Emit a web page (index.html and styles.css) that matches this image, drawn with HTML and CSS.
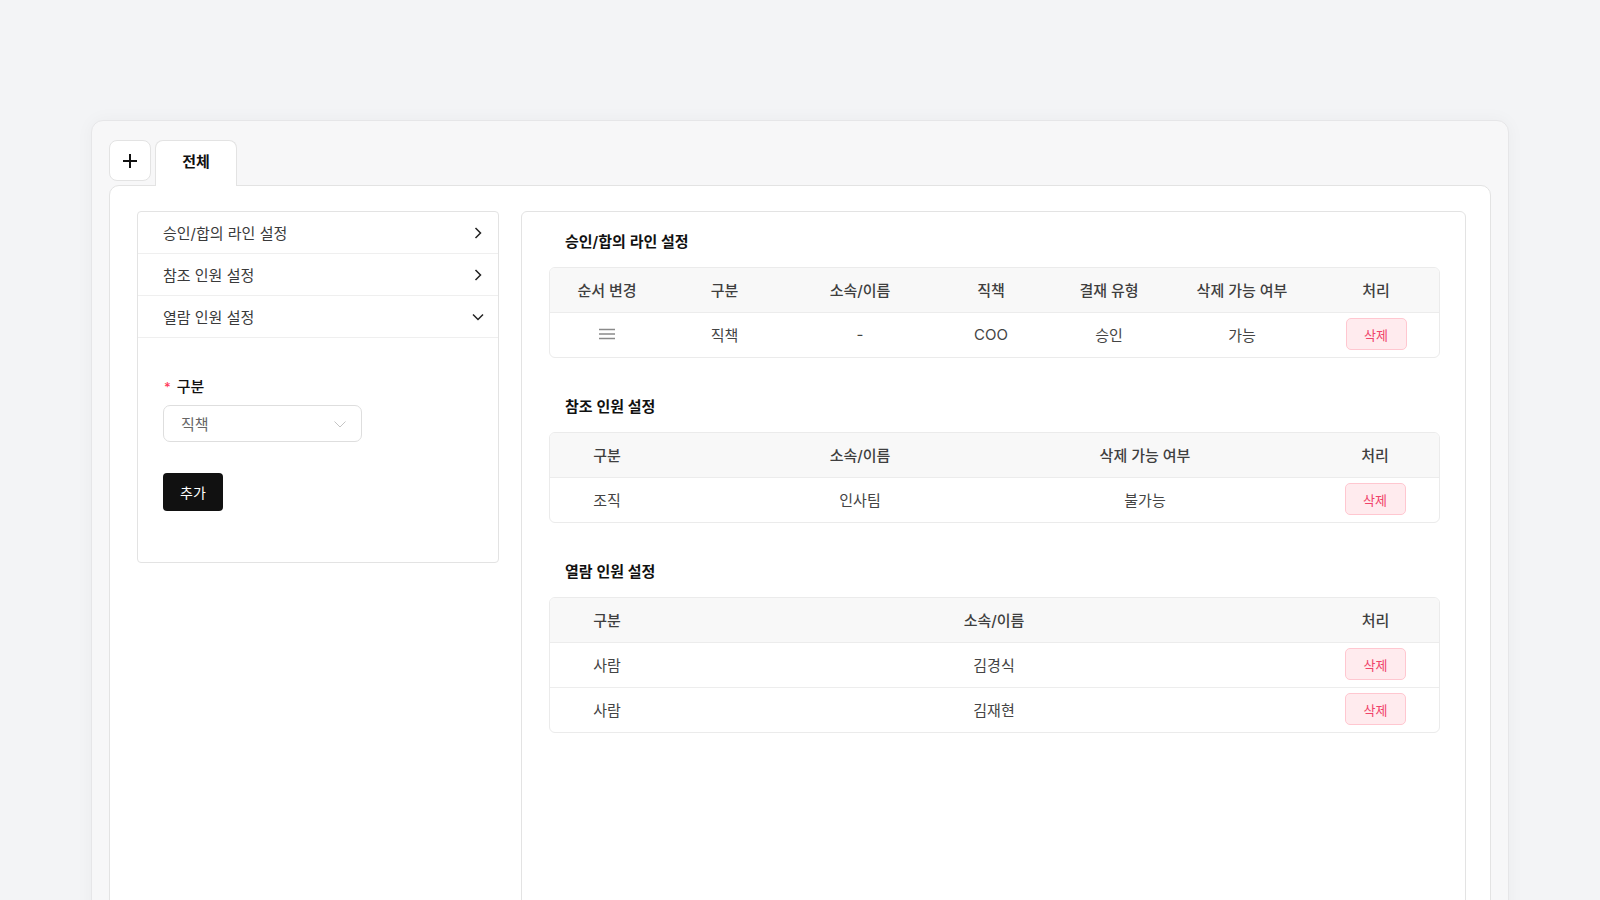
FILE: index.html
```html
<!DOCTYPE html>
<html lang="ko">
<head>
    <meta charset="UTF-8">
    <meta name="viewport" content="width=device-width, initial-scale=1.0">
    <title>결재 라인 설정</title>
    <link rel="stylesheet" href="styles.css">
</head>
<body>
    <div class="card">
        <div class="tabs">
            <button class="tab-add" aria-label="탭 추가">
                <svg width="16" height="16" viewBox="0 0 16 16"><path d="M8 1v14M1 8h14" stroke="#111" stroke-width="2" fill="none"/></svg>
            </button>
            <div class="tab active">전체</div>
        </div>

        <div class="panel">
            <aside class="side">
                <div class="acc-item">
                    <span>승인/합의 라인 설정</span>
                    <svg width="16" height="16" viewBox="0 0 16 16"><path d="M5.5 3l5 5-5 5" stroke="#222" stroke-width="1.5" fill="none"/></svg>
                </div>
                <div class="acc-item">
                    <span>참조 인원 설정</span>
                    <svg width="16" height="16" viewBox="0 0 16 16"><path d="M5.5 3l5 5-5 5" stroke="#222" stroke-width="1.5" fill="none"/></svg>
                </div>
                <div class="acc-item">
                    <span>열람 인원 설정</span>
                    <svg width="16" height="16" viewBox="0 0 16 16"><path d="M3 5.5l5 5 5-5" stroke="#222" stroke-width="1.5" fill="none"/></svg>
                </div>
                <div class="acc-body">
                    <div class="field-label"><span class="req">*</span>구분</div>
                    <div class="select">
                        <span>직책</span>
                        <svg width="14" height="14" viewBox="0 0 14 14"><path d="M1.5 4.5l5.5 5.5 5.5-5.5" stroke="#c4c4c4" stroke-width="1" fill="none"/></svg>
                    </div>
                    <button class="btn-dark">추가</button>
                </div>
            </aside>

            <section class="content">
                <h2 class="sec-title">승인/합의 라인 설정</h2>
                <div class="tbl-wrap">
                    <table class="tbl">
                        <colgroup>
                            <col style="width:114px"><col style="width:121px"><col style="width:150px"><col style="width:112px"><col style="width:124px"><col style="width:142px"><col>
                        </colgroup>
                        <thead>
                            <tr><th>순서 변경</th><th>구분</th><th>소속/이름</th><th>직책</th><th>결재 유형</th><th>삭제 가능 여부</th><th>처리</th></tr>
                        </thead>
                        <tbody>
                            <tr>
                                <td>
                                    <svg class="drag" width="18" height="14" viewBox="0 0 18 14"><path d="M1 2.5h16M1 7h16M1 11.5h16" stroke="#8a8a8a" stroke-width="1.4"/></svg>
                                </td>
                                <td>직책</td><td>-</td><td>COO</td><td>승인</td><td>가능</td>
                                <td><button class="btn-del">삭제</button></td>
                            </tr>
                        </tbody>
                    </table>
                </div>

                <h2 class="sec-title">참조 인원 설정</h2>
                <div class="tbl-wrap">
                    <table class="tbl">
                        <colgroup>
                            <col style="width:114px"><col style="width:392px"><col style="width:178px"><col>
                        </colgroup>
                        <thead>
                            <tr><th>구분</th><th>소속/이름</th><th>삭제 가능 여부</th><th class="pl">처리</th></tr>
                        </thead>
                        <tbody>
                            <tr>
                                <td>조직</td><td>인사팀</td><td>불가능</td>
                                <td class="pl"><button class="btn-del">삭제</button></td>
                            </tr>
                        </tbody>
                    </table>
                </div>

                <h2 class="sec-title">열람 인원 설정</h2>
                <div class="tbl-wrap">
                    <table class="tbl">
                        <colgroup>
                            <col style="width:114px"><col><col style="width:115px">
                        </colgroup>
                        <thead>
                            <tr><th>구분</th><th>소속/이름</th><th class="pr">처리</th></tr>
                        </thead>
                        <tbody>
                            <tr><td>사람</td><td>김경식</td><td class="pr"><button class="btn-del">삭제</button></td></tr>
                            <tr><td>사람</td><td>김재현</td><td class="pr"><button class="btn-del">삭제</button></td></tr>
                        </tbody>
                    </table>
                </div>
            </section>
        </div>
    </div>
</body>
</html>
```

FILE: styles.css
```css
html, body {
    height: 900px;
    overflow: hidden;
}
body {
    margin: 0;
    padding: 120px 0 0 91px;
    background-color: #f3f4f6;
    font-family: 'Inter', 'Noto Sans CJK KR', sans-serif;
    color: #333;
    box-sizing: border-box;
}
button {
    font-family: inherit;
    cursor: pointer;
}
.card {
    width: 1418px;
    height: 820px;
    box-sizing: border-box;
    padding: 19px 17px 0 17px;
    background: #f7f7f8;
    border: 1px solid #e6e6e8;
    border-radius: 12px;
    box-shadow: 0 0 18px rgba(0, 0, 0, 0.04);
}
.tabs {
    display: flex;
    gap: 4px;
    align-items: flex-start;
    position: relative;
    z-index: 1;
}
.tab-add {
    width: 42px;
    height: 41px;
    display: flex;
    align-items: center;
    justify-content: center;
    background: #fff;
    border: 1px solid #e3e3e3;
    border-radius: 8px;
    padding: 0;
}
.tab {
    width: 82px;
    height: 45px;
    box-sizing: border-box;
    display: flex;
    align-items: center;
    justify-content: center;
    background: #fff;
    border: 1px solid #e3e3e3;
    border-bottom: none;
    border-radius: 8px 8px 0 0;
    font-size: 15px;
    font-weight: 600;
    color: #111;
    padding-bottom: 6px;
}
.tab.active {
    height: 46px;
    margin-bottom: -1px;
}
.panel {
    display: flex;
    gap: 22px;
    align-items: flex-start;
    height: 800px;
    box-sizing: border-box;
    padding: 25px 24px 0 27px;
    background: #fff;
    border: 1px solid #e3e3e3;
    border-radius: 10px;
}

/* accordion */
.side {
    width: 362px;
    flex: none;
    box-sizing: border-box;
    border: 1px solid #e3e3e3;
    border-radius: 4px;
}
.acc-item {
    height: 41px;
    display: flex;
    align-items: center;
    justify-content: space-between;
    padding: 0 12px 0 25px;
    border-bottom: 1px solid #efefef;
    font-size: 15px;
    color: #3a3a3a;
}
.acc-body {
    padding: 38px 25px 51px 25px;
}
.field-label {
    font-size: 15px;
    font-weight: 500;
    line-height: 22px;
    color: #111;
    margin-bottom: 7px;
}
.req {
    color: #ff3b5c;
    font-size: 13px;
    margin-right: 6px;
    margin-left: 1px;
}
.select {
    width: 199px;
    height: 37px;
    box-sizing: border-box;
    display: flex;
    align-items: center;
    justify-content: space-between;
    padding: 0 14px 0 17px;
    border: 1px solid #dedede;
    border-radius: 7px;
    font-size: 15px;
    color: #666;
}
.btn-dark {
    display: block;
    margin-top: 31px;
    width: 60px;
    height: 38px;
    background: #111;
    color: #fff;
    border: none;
    border-radius: 4px;
    font-size: 14px;
}

/* tables */
.content {
    flex: 1;
    height: 780px;
    box-sizing: border-box;
    padding: 19px 25px 0 27px;
    border: 1px solid #e3e3e3;
    border-radius: 6px;
}
.sec-title {
    margin: 0 0 14px 0;
    padding-left: 16px;
    font-size: 15px;
    font-weight: 600;
    line-height: 22px;
    color: #111;
}
.tbl-wrap {
    border: 1px solid #ebebeb;
    border-radius: 6px;
    overflow: hidden;
    margin-bottom: 38px;
}
.tbl {
    width: 100%;
    border-collapse: collapse;
    table-layout: fixed;
    font-size: 15px;
}
.tbl th, .tbl td {
    height: 42px;
    padding: 0 0 2px 0;
    text-align: center;
    vertical-align: middle;
}
.tbl th {
    background: #f8f8f8;
    font-weight: 500;
    color: #3f3f3f;
    border-bottom: 1px solid #ececec;
}
.tbl td {
    color: #444;
    border-bottom: 1px solid #ededed;
}
.tbl tbody tr:last-child td {
    border-bottom: none;
}
.tbl .pl {
    padding-left: 77px;
}
.tbl .pr {
    padding-right: 12px;
}
.drag {
    display: block;
    margin: 0 auto;
}
.btn-del {
    width: 61px;
    height: 32px;
    background: #ffebee;
    border: 1px solid #ffc7d0;
    border-radius: 5px;
    color: #f0436a;
    font-size: 13px;
    padding: 0;
}
```
